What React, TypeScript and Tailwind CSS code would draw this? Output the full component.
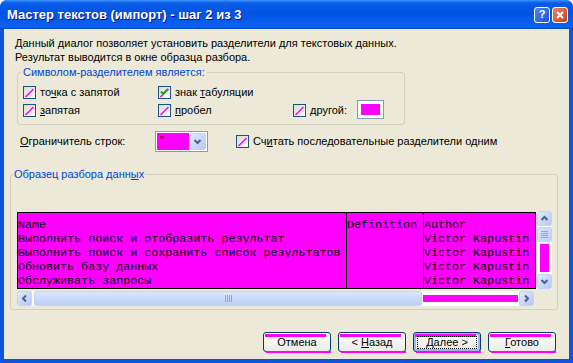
import React from 'react'

const MAG = 'bg-[#ff00ff]'

function Check({ checked }: { checked?: boolean }) {
  return (
    <svg width="13" height="13" viewBox="0 0 13 13" className="shrink-0">
      <defs>
        <linearGradient id="cbg" x1="0" y1="0" x2="1" y2="1">
          <stop offset="0" stopColor="#d8d8d0" />
          <stop offset="1" stopColor="#ffffff" />
        </linearGradient>
      </defs>
      <rect x="0.5" y="0.5" width="12" height="12" fill="url(#cbg)" stroke="#1c5180" />
      <path d="M2.5 11 L10.5 3" stroke="#ff00ff" strokeWidth="1.6" />
      {checked && <path d="M3 5.5 L5 8 L10 3" stroke="#21a121" strokeWidth="2" fill="none" />}
    </svg>
  )
}

function SBtn({ dir }: { dir: 'up' | 'down' | 'left' | 'right' }) {
  const paths = {
    up: 'M3.5 8 L6.5 5 L9.5 8',
    down: 'M3.5 5 L6.5 8 L9.5 5',
    left: 'M8 3.5 L5 6.5 L8 9.5',
    right: 'M5 3.5 L8 6.5 L5 9.5',
  }
  return (
    <div className="w-[15px] h-[15px] shrink-0 rounded-[2px] border border-[#c3d3fd] bg-gradient-to-br from-[#e1eafe] to-[#b4c8f6] flex items-center justify-center">
      <svg width="13" height="13" viewBox="0 0 13 13">
        <path d={paths[dir]} stroke="#4d6185" strokeWidth="2" fill="none" />
      </svg>
    </div>
  )
}

function Btn({ children, focused }: { children: React.ReactNode; focused?: boolean }) {
  return (
    <div
      className={
        'relative w-[68px] h-[20px] rounded-[3px] border border-[#003c74] bg-gradient-to-b from-white to-[#ecebe6] flex items-center justify-center ' +
        (focused ? 'shadow-[inset_0_0_0_2px_#98b8ea]' : '')
      }
    >
      <div className={'absolute top-[1px] left-[1px] right-[4px] h-[3px] ' + MAG} />
      <div className={'absolute -bottom-[2px] left-[2px] -right-[1px] h-[2px] ' + MAG} />
      {focused && <div className="absolute top-[3px] left-[3px] right-[3px] bottom-[2px] border border-dotted border-black" />}
      <span className="relative pt-[1px]">{children}</span>
    </div>
  )
}

export default function App() {
  return (
    <div className="w-[573px] h-[363px] bg-white font-['Liberation_Sans',Arial,sans-serif] text-[11px] text-black">
      <div className="w-full h-full flex flex-col rounded-t-[7px] overflow-hidden bg-[#0a55e0]">
        {/* title bar */}
        <div className="h-[29px] shrink-0 flex items-center pl-[7px] pr-[5px] bg-[linear-gradient(to_bottom,#3d95ff_0%,#0a5ce8_10%,#0054e3_45%,#0a5fef_85%,#0b61f0_92%,#0046cf_100%)]">
          <div className="flex-1 text-white font-bold text-[13px] [text-shadow:1px_1px_#0f1089]">
            Мастер текстов (импорт) - шаг 2 из 3
          </div>
          <div className="flex gap-[2px]">
            <div className="w-[16px] h-[16px] rounded-[3px] border border-white bg-gradient-to-br from-[#4f86f2] to-[#1e50cf] flex items-center justify-center text-white font-bold text-[11px] leading-none">?</div>
            <div className="w-[16px] h-[16px] rounded-[3px] border border-white bg-gradient-to-br from-[#e98463] to-[#c93b12] flex items-center justify-center">
              <svg width="10" height="10" viewBox="0 0 10 10">
                <path d="M2 2 L8 8 M8 2 L2 8" stroke="white" strokeWidth="2" />
              </svg>
            </div>
          </div>
        </div>

        {/* body */}
        <div className="flex-1 mx-[4px] mb-[4px] bg-[#ece9d8] flex flex-col">
          <div className="pl-[11px] pt-[7px] leading-[14px]">
            <div>Данный диалог позволяет установить разделители для текстовых данных.</div>
            <div>Результат выводится в окне образца разбора.</div>
          </div>

          <fieldset className="ml-[13px] mt-[2px] w-[388px] border border-[#d0d0bf] rounded-[3px] px-[5px] pb-[4px]">
            <legend className="-ml-[2px] px-[2px] text-[#0046d5] leading-[13px]">Символом-разделителем является:</legend>
            <div className="grid grid-cols-[135px_135px_1fr] mt-[4px]">
              <div className="h-[18px] flex items-center gap-[4px]">
                <Check />
                <span>то<span className="underline">ч</span>ка с запятой</span>
              </div>
              <div className="h-[18px] flex items-center gap-[4px]">
                <Check checked />
                <span>знак <span className="underline">т</span>абуляции</span>
              </div>
              <div />
              <div className="h-[19px] flex items-center gap-[4px]">
                <Check />
                <span><span className="underline">з</span>апятая</span>
              </div>
              <div className="h-[19px] flex items-center gap-[4px]">
                <Check />
                <span><span className="underline">п</span>робел</span>
              </div>
              <div className="h-[19px] flex items-center">
                <Check />
                <span className="ml-[4px]"><span className="underline">д</span>ругой:</span>
                <div className="ml-[10px] -mt-[3px] w-[27px] h-[19px] border border-[#7f9db9] bg-white p-[3px]">
                  <div className={'w-full h-full ' + MAG} />
                </div>
              </div>
            </div>
          </fieldset>

          <div className="flex items-center mt-[6px] h-[21px]">
            <div className="pl-[16px] w-[151px]"><span className="underline">О</span>граничитель строк:</div>
            <div className="w-[53px] h-[21px] border border-[#7f9db9] bg-white p-[1px] flex">
              <div className={'flex-1 pl-[3px] leading-[14px] ' + MAG}>"</div>
              <div className="w-[17px] rounded-[2px] border border-[#c3d3fd] bg-gradient-to-br from-[#e1eafe] to-[#b4c8f6] flex items-center justify-center">
                <svg width="11" height="11" viewBox="0 0 11 11">
                  <path d="M2.5 4 L5.5 7 L8.5 4" stroke="#4d6185" strokeWidth="2" fill="none" />
                </svg>
              </div>
            </div>
            <div className="ml-[28px] flex items-center gap-[4px]">
              <Check />
              <span>Сч<span className="underline">и</span>тать последовательные разделители одним</span>
            </div>
          </div>

          <fieldset className="ml-[6px] mt-[16px] w-[548px] border border-[#d0d0bf] rounded-[3px] pl-[6px] pb-[3px]">
            <legend className="-ml-[4px] px-[1px] text-[#0046d5] leading-[13px]">
              Образец разбора данн<span className="underline">ы</span>х
            </legend>
            <div className="mt-[31px] flex">
              <div className={'w-[519px] h-[77px] border border-black flex overflow-hidden font-["Liberation_Mono",monospace] text-[11.7px] leading-[14px] whitespace-nowrap ' + MAG}>
                <div className="w-[329px] shrink-0 border-r border-black pt-[5px] overflow-hidden">
                  <div>Name</div>
                  <div>Выполнить поиск и отобразить результат</div>
                  <div>Выполнить поиск и сохранить список результатов</div>
                  <div>Обновить базу данных</div>
                  <div>Обслуживать запросы</div>
                </div>
                <div className="w-[77px] shrink-0 border-r border-black pt-[5px] overflow-hidden">
                  <div>Definition</div>
                </div>
                <div className="flex-1 pt-[5px] overflow-hidden">
                  <div>Author</div>
                  <div>Victor Kapustin</div>
                  <div>Victor Kapustin</div>
                  <div>Victor Kapustin</div>
                  <div>Victor Kapustin</div>
                </div>
              </div>
              <div className="ml-[1px] -mt-[1px] w-[15px] h-[78px] flex flex-col bg-white">
                <SBtn dir="up" />
                <div className="mt-[1px] h-[15px] rounded-[2px] border border-[#c3d3fd] bg-gradient-to-br from-[#dbe5fe] to-[#bccff8] flex flex-col items-center justify-center gap-[1px]">
                  <div className="w-[7px] h-px bg-[#8ea5d8]" />
                  <div className="w-[7px] h-px bg-[#8ea5d8]" />
                  <div className="w-[7px] h-px bg-[#8ea5d8]" />
                  <div className="w-[7px] h-px bg-[#8ea5d8]" />
                </div>
                <div className="flex-1 px-[3px] py-[2px]">
                  <div className={'w-full h-full ' + MAG} />
                </div>
                <SBtn dir="down" />
              </div>
            </div>
            <div className="mt-[2px] w-[517px] h-[15px] flex bg-white">
              <SBtn dir="left" />
              <div className="ml-[2px] w-[388px] rounded-[2px] border border-[#c3d3fd] bg-gradient-to-b from-[#dbe5fe] to-[#bccff8] flex items-center justify-center gap-[1px]">
                <div className="w-px h-[7px] bg-[#8ea5d8]" />
                <div className="w-px h-[7px] bg-[#8ea5d8]" />
                <div className="w-px h-[7px] bg-[#8ea5d8]" />
                <div className="w-px h-[7px] bg-[#8ea5d8]" />
              </div>
              <div className="flex-1 py-[4px] pl-[1px] pr-[1px]">
                <div className={'w-full h-full ' + MAG} />
              </div>
              <SBtn dir="right" />
            </div>
          </fieldset>

          <div className="mt-[22px] flex justify-end gap-[7px] pr-[13px]">
            <Btn>Отмена</Btn>
            <Btn>&lt; <span className="underline">Н</span>азад</Btn>
            <Btn focused><span className="underline">Д</span>алее &gt;</Btn>
            <Btn><span className="underline">Г</span>отово</Btn>
          </div>
        </div>
      </div>
    </div>
  )
}
